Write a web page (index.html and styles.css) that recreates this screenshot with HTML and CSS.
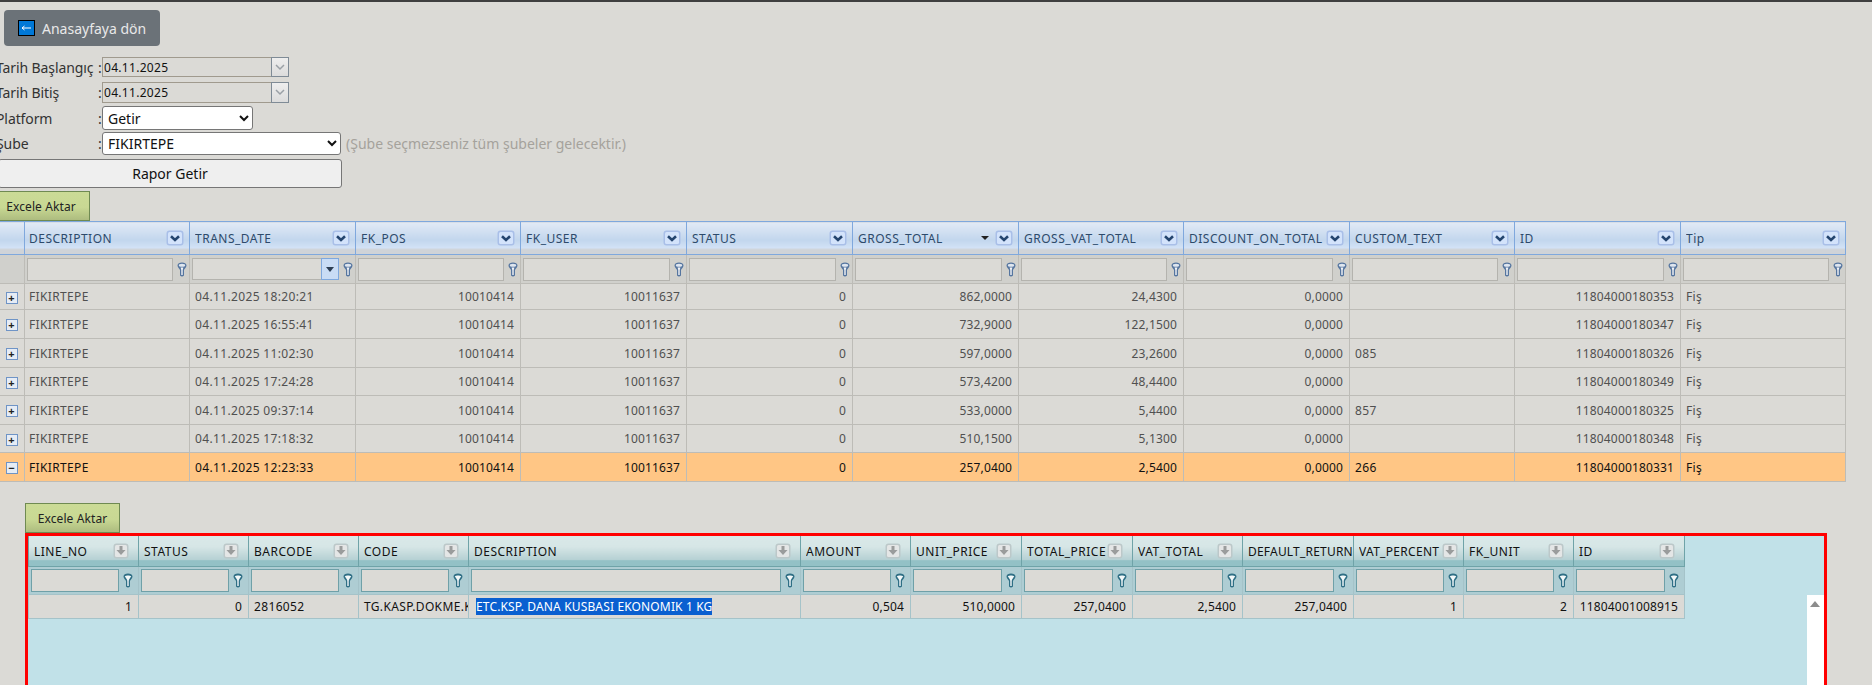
FILE: index.html
```html
<!DOCTYPE html>
<html lang="tr">
<head>
    <meta charset="UTF-8">
    <title>Rapor</title>
    <link rel="stylesheet" href="styles.css">
</head>
<body>
    <svg class="defs" width="0" height="0">
        <symbol id="funnel" viewBox="0 0 10 15">
            <path d="M0.5 3.5C0.5 1.5 2.5 0.5 5 0.5S9.5 1.5 9.5 3.5C9.5 5.5 7.5 6.5 7 8V13.5Q5 15.5 3 13.5V8C2.5 6.5 0.5 5.5 0.5 3.5Z" fill="#55759f"/>
            <ellipse cx="5" cy="3.2" rx="3.2" ry="1.5" fill="#dfe6ef"/>
            <path d="M3.6 5.6H6.4L5.7 8V13H4.3V8Z" fill="#f2f4f7"/>
        </symbol>
        <symbol id="funnel-sub" viewBox="0 0 10 15">
            <path d="M0.5 3.5C0.5 1.5 2.5 0.5 5 0.5S9.5 1.5 9.5 3.5C9.5 5.5 7.5 6.5 7 8V13.5Q5 15.5 3 13.5V8C2.5 6.5 0.5 5.5 0.5 3.5Z" fill="#2f6f85"/>
            <path d="M1.8 3.2C3.2 2.2 6.8 2.2 8.2 3.2C7.2 5.2 5.7 6 5.7 8V13H4.3V8C4.3 6 2.8 5.2 1.8 3.2Z" fill="#f2f8f9"/>
        </symbol>
        <symbol id="sort-down" viewBox="0 0 18 16">
            <rect x="0.5" y="0.5" width="17" height="15" rx="3" fill="#a9bfe8"/>
            <rect x="2" y="2" width="14" height="12" rx="1.5" fill="#d3e3fb"/>
            <path d="M5 6.3L9 10L13 6.3" fill="none" stroke="#24456f" stroke-width="2.6"/>
        </symbol>
        <symbol id="sort-grey" viewBox="0 0 16 16">
            <rect x="0.5" y="0.5" width="15" height="15" rx="3" fill="#bcc8c9"/>
            <rect x="2" y="2" width="12" height="12" rx="1.5" fill="#e4e6e6"/>
            <path d="M6.5 3H9.5V7H12.5L8 12L3.5 7H6.5Z" fill="#9a9c9c"/>
        </symbol>
    </svg>

    <div class="page">
        <a class="home-btn"><span class="home-icon"><svg width="15" height="14" viewBox="0 0 15 14"><path d="M3 7H12M3 7L5.5 5M3 7L5.5 9" fill="none" stroke="#fff" stroke-width="1"/></svg></span>Anasayfaya dön</a>

        <div class="form-row row-date1">
            <label>Tarih Başlangıç</label><span class="colon">:</span>
            <div class="date-box"><span class="date-text">04.11.2025</span><span class="date-btn"><svg width="10" height="7" viewBox="0 0 10 7"><path d="M1 1L5 5L9 1" fill="none" stroke="#9aa0a6" stroke-width="1.5"/></svg></span></div>
        </div>
        <div class="form-row row-date2">
            <label>Tarih Bitiş</label><span class="colon">:</span>
            <div class="date-box"><span class="date-text">04.11.2025</span><span class="date-btn"><svg width="10" height="7" viewBox="0 0 10 7"><path d="M1 1L5 5L9 1" fill="none" stroke="#9aa0a6" stroke-width="1.5"/></svg></span></div>
        </div>
        <div class="form-row row-platform">
            <label>Platform</label><span class="colon">:</span>
            <select class="select-platform"><option>Getir</option></select>
        </div>
        <div class="form-row row-sube">
            <label>Şube</label><span class="colon">:</span>
            <select class="select-sube"><option>FIKIRTEPE</option></select>
            <span class="hint">(Şube seçmezseniz tüm şubeler gelecektir.)</span>
        </div>
        <button class="report-btn">Rapor Getir</button>
        <div class="excel-btn excel-top">Excele Aktar</div>

        <table class="grid main-grid">
            <colgroup>
                <col class="c-exp">
                <col class="c-m"><col class="c-l"><col class="c-m"><col class="c-l"><col class="c-l"><col class="c-l"><col class="c-m"><col class="c-l"><col class="c-m"><col class="c-l"><col class="c-m">
            </colgroup>
            <tr class="head">
                <th></th>
                <th><div class="th-in"><span>DESCRIPTION</span><svg class="sort"><use href="#sort-down"/></svg></div></th>
                <th><div class="th-in"><span>TRANS_DATE</span><svg class="sort"><use href="#sort-down"/></svg></div></th>
                <th><div class="th-in"><span>FK_POS</span><svg class="sort"><use href="#sort-down"/></svg></div></th>
                <th><div class="th-in"><span>FK_USER</span><svg class="sort"><use href="#sort-down"/></svg></div></th>
                <th><div class="th-in"><span>STATUS</span><svg class="sort"><use href="#sort-down"/></svg></div></th>
                <th><div class="th-in"><span>GROSS_TOTAL</span><i class="sorted"></i><svg class="sort"><use href="#sort-down"/></svg></div></th>
                <th><div class="th-in"><span>GROSS_VAT_TOTAL</span><svg class="sort"><use href="#sort-down"/></svg></div></th>
                <th><div class="th-in"><span>DISCOUNT_ON_TOTAL</span><svg class="sort"><use href="#sort-down"/></svg></div></th>
                <th><div class="th-in"><span>CUSTOM_TEXT</span><svg class="sort"><use href="#sort-down"/></svg></div></th>
                <th><div class="th-in"><span>ID</span><svg class="sort"><use href="#sort-down"/></svg></div></th>
                <th><div class="th-in"><span>Tip</span><svg class="sort"><use href="#sort-down"/></svg></div></th>
            </tr>
            <tr class="filter">
                <td></td>
                <td><div class="f-in"><input><svg class="funnel"><use href="#funnel"/></svg></div></td>
                <td><div class="f-in"><div class="f-combo"><input><span class="f-drop"></span></div><svg class="funnel"><use href="#funnel"/></svg></div></td>
                <td><div class="f-in"><input><svg class="funnel"><use href="#funnel"/></svg></div></td>
                <td><div class="f-in"><input><svg class="funnel"><use href="#funnel"/></svg></div></td>
                <td><div class="f-in"><input><svg class="funnel"><use href="#funnel"/></svg></div></td>
                <td><div class="f-in"><input><svg class="funnel"><use href="#funnel"/></svg></div></td>
                <td><div class="f-in"><input><svg class="funnel"><use href="#funnel"/></svg></div></td>
                <td><div class="f-in"><input><svg class="funnel"><use href="#funnel"/></svg></div></td>
                <td><div class="f-in"><input><svg class="funnel"><use href="#funnel"/></svg></div></td>
                <td><div class="f-in"><input><svg class="funnel"><use href="#funnel"/></svg></div></td>
                <td><div class="f-in"><input><svg class="funnel"><use href="#funnel"/></svg></div></td>
            </tr>
            <tr class="first"><td class="exp"><span class="plus">+</span></td><td>FIKIRTEPE</td><td>04.11.2025 18:20:21</td><td class="r">10010414</td><td class="r">10011637</td><td class="r">0</td><td class="r">862,0000</td><td class="r">24,4300</td><td class="r">0,0000</td><td></td><td class="r">11804000180353</td><td>Fiş</td></tr>
            <tr><td class="exp"><span class="plus">+</span></td><td>FIKIRTEPE</td><td>04.11.2025 16:55:41</td><td class="r">10010414</td><td class="r">10011637</td><td class="r">0</td><td class="r">732,9000</td><td class="r">122,1500</td><td class="r">0,0000</td><td></td><td class="r">11804000180347</td><td>Fiş</td></tr>
            <tr><td class="exp"><span class="plus">+</span></td><td>FIKIRTEPE</td><td>04.11.2025 11:02:30</td><td class="r">10010414</td><td class="r">10011637</td><td class="r">0</td><td class="r">597,0000</td><td class="r">23,2600</td><td class="r">0,0000</td><td>085</td><td class="r">11804000180326</td><td>Fiş</td></tr>
            <tr class="short"><td class="exp"><span class="plus">+</span></td><td>FIKIRTEPE</td><td>04.11.2025 17:24:28</td><td class="r">10010414</td><td class="r">10011637</td><td class="r">0</td><td class="r">573,4200</td><td class="r">48,4400</td><td class="r">0,0000</td><td></td><td class="r">11804000180349</td><td>Fiş</td></tr>
            <tr><td class="exp"><span class="plus">+</span></td><td>FIKIRTEPE</td><td>04.11.2025 09:37:14</td><td class="r">10010414</td><td class="r">10011637</td><td class="r">0</td><td class="r">533,0000</td><td class="r">5,4400</td><td class="r">0,0000</td><td>857</td><td class="r">11804000180325</td><td>Fiş</td></tr>
            <tr class="short"><td class="exp"><span class="plus">+</span></td><td>FIKIRTEPE</td><td>04.11.2025 17:18:32</td><td class="r">10010414</td><td class="r">10011637</td><td class="r">0</td><td class="r">510,1500</td><td class="r">5,1300</td><td class="r">0,0000</td><td></td><td class="r">11804000180348</td><td>Fiş</td></tr>
            <tr class="active"><td class="exp"><span class="plus">&#8722;</span></td><td>FIKIRTEPE</td><td>04.11.2025 12:23:33</td><td class="r">10010414</td><td class="r">10011637</td><td class="r">0</td><td class="r">257,0400</td><td class="r">2,5400</td><td class="r">0,0000</td><td>266</td><td class="r">11804000180331</td><td>Fiş</td></tr>
        </table>

        <div class="detail">
            <div class="excel-btn">Excele Aktar</div>
            <div class="detail-box">
                <table class="grid sub-grid">
                    <colgroup>
                        <col class="s-a"><col class="s-a"><col class="s-a"><col class="s-a"><col class="s-desc"><col class="s-a"><col class="s-b"><col class="s-b"><col class="s-a"><col class="s-b"><col class="s-a"><col class="s-a"><col class="s-b">
                    </colgroup>
                    <tr class="head">
                        <th><div class="th-in"><span>LINE_NO</span><svg class="sort"><use href="#sort-grey"/></svg></div></th>
                        <th><div class="th-in"><span>STATUS</span><svg class="sort"><use href="#sort-grey"/></svg></div></th>
                        <th><div class="th-in"><span>BARCODE</span><svg class="sort"><use href="#sort-grey"/></svg></div></th>
                        <th><div class="th-in"><span>CODE</span><svg class="sort"><use href="#sort-grey"/></svg></div></th>
                        <th><div class="th-in"><span>DESCRIPTION</span><svg class="sort"><use href="#sort-grey"/></svg></div></th>
                        <th><div class="th-in"><span>AMOUNT</span><svg class="sort"><use href="#sort-grey"/></svg></div></th>
                        <th><div class="th-in"><span>UNIT_PRICE</span><svg class="sort"><use href="#sort-grey"/></svg></div></th>
                        <th><div class="th-in"><span>TOTAL_PRICE</span><svg class="sort"><use href="#sort-grey"/></svg></div></th>
                        <th><div class="th-in"><span>VAT_TOTAL</span><svg class="sort"><use href="#sort-grey"/></svg></div></th>
                        <th><div class="th-in wide"><span>DEFAULT_RETURN</span></div></th>
                        <th><div class="th-in tight"><span>VAT_PERCENT</span><svg class="sort"><use href="#sort-grey"/></svg></div></th>
                        <th><div class="th-in"><span>FK_UNIT</span><svg class="sort"><use href="#sort-grey"/></svg></div></th>
                        <th><div class="th-in"><span>ID</span><svg class="sort"><use href="#sort-grey"/></svg></div></th>
                    </tr>
                    <tr class="filter">
                        <td><div class="f-in"><input><svg class="funnel"><use href="#funnel-sub"/></svg></div></td>
                        <td><div class="f-in"><input><svg class="funnel"><use href="#funnel-sub"/></svg></div></td>
                        <td><div class="f-in"><input><svg class="funnel"><use href="#funnel-sub"/></svg></div></td>
                        <td><div class="f-in"><input><svg class="funnel"><use href="#funnel-sub"/></svg></div></td>
                        <td><div class="f-in"><input><svg class="funnel"><use href="#funnel-sub"/></svg></div></td>
                        <td><div class="f-in"><input><svg class="funnel"><use href="#funnel-sub"/></svg></div></td>
                        <td><div class="f-in"><input><svg class="funnel"><use href="#funnel-sub"/></svg></div></td>
                        <td><div class="f-in"><input><svg class="funnel"><use href="#funnel-sub"/></svg></div></td>
                        <td><div class="f-in"><input><svg class="funnel"><use href="#funnel-sub"/></svg></div></td>
                        <td><div class="f-in"><input><svg class="funnel"><use href="#funnel-sub"/></svg></div></td>
                        <td><div class="f-in"><input><svg class="funnel"><use href="#funnel-sub"/></svg></div></td>
                        <td><div class="f-in"><input><svg class="funnel"><use href="#funnel-sub"/></svg></div></td>
                        <td><div class="f-in"><input><svg class="funnel"><use href="#funnel-sub"/></svg></div></td>
                    </tr>
                    <tr>
                        <td class="r">1</td><td class="r">0</td><td>2816052</td><td class="code">TG.KASP.DOKME.K</td><td><span class="picked">ETC.KSP. DANA KUSBASI EKONOMIK 1 KG</span></td><td class="r">0,504</td><td class="r">510,0000</td><td class="r">257,0400</td><td class="r">2,5400</td><td class="r">257,0400</td><td class="r">1</td><td class="r">2</td><td class="r">11804001008915</td>
                    </tr>
                </table>
                <div class="scrollbar"><span class="scroll-up"></span></div>
            </div>
        </div>
    </div>
</body>
</html>
```

FILE: styles.css
```css
* {
    margin: 0;
    padding: 0;
    box-sizing: border-box;
}

html, body {
    height: 100%;
    overflow: hidden;
}

body {
    background-color: #dbdad6;
    border-top: 2px solid #3f3f3f;
    font-family: "Noto Sans", "Open Sans", sans-serif;
    font-size: 14px;
    color: #333;
}

.defs {
    position: absolute;
}

.page {
    margin-left: -2px;
    width: 1880px;
}

.home-btn {
    display: flex;
    align-items: center;
    width: 156px;
    height: 36px;
    margin: 8px 0 11px 6px;
    padding-left: 14px;
    background-color: #6b7278;
    border-radius: 4px;
    color: #e8e8e8;
    font-size: 14px;
}

.home-icon {
    display: block;
    width: 17px;
    height: 16px;
    margin-right: 7px;
    background-color: #0078d7;
    border: 1px solid #000;
}

.home-icon svg {
    display: block;
}

/* form */
.form-row {
    display: flex;
    align-items: center;
}

.form-row label {
    width: 102px;
    margin-left: -2px;
    letter-spacing: -0.1px;
    color: #333;
}

.colon {
    width: 4px;
    color: #333;
}

.row-date1 { height: 20px; margin-bottom: 5px; }
.row-date2 { height: 21px; margin-bottom: 3px; }
.row-platform { height: 24px; margin-bottom: 2px; }
.row-sube { height: 23px; margin-bottom: 4px; }

.date-box {
    display: flex;
    width: 187px;
    height: 100%;
    border: 1px solid #a09a8e;
    border-right: none;
}

.date-text {
    flex: 1;
    padding-left: 1px;
    color: #111;
    font-size: 12px;
    letter-spacing: 0.3px;
    line-height: 19px;
}

.date-btn {
    display: flex;
    align-items: center;
    justify-content: center;
    width: 18px;
    margin: -1px 0;
    background: linear-gradient(#eee, #dcdcdc);
    border: 1px solid #7f8b96;
}

select {
    height: 100%;
    padding-left: 1px;
    background-color: #fff;
    border: 1px solid #767676;
    border-radius: 3px;
    color: #111;
    font-family: inherit;
    font-size: 14px;
}

.select-platform { width: 151px; }
.select-sube { width: 239px; }

.hint {
    margin-left: 5px;
    color: #a5a29c;
}

.report-btn {
    display: block;
    width: 344px;
    height: 29px;
    margin-bottom: 3px;
    background-color: #efefef;
    border: 1px solid #767676;
    border-radius: 3px;
    color: #111;
    font-family: inherit;
    font-size: 14px;
}

.excel-btn {
    width: 95px;
    height: 30px;
    background: linear-gradient(#cbdb96 0%, #c8d893 55%, #adbc7f 100%);
    border: 1px solid #6f8a52;
    color: #222;
    font-size: 12px;
    letter-spacing: 0.1px;
    line-height: 29px;
    text-align: center;
}

.excel-top {
    margin-left: -3px;
    padding-right: 3px;
}

/* grids */
.grid {
    table-layout: fixed;
    border-collapse: collapse;
    font-size: 12px;
}

.main-grid {
    width: 1847px;
    color: #505050;
}

.c-exp { width: 26px; }
.c-m { width: 165px; }
.c-l { width: 166px; }

.grid td, .grid th {
    overflow: hidden;
    white-space: nowrap;
    font-weight: normal;
    text-align: left;
}

.grid td {
    padding: 0 5px;
    border: 1px solid #bdbcb7;
    letter-spacing: 0.35px;
}

.grid td.r {
    padding-right: 6px;
    letter-spacing: 0.15px;
    text-align: right;
}

.main-grid tr { height: 29px; }
.main-grid tr.first { height: 26px; }
.main-grid tr.short { height: 28px; }

.main-grid td:nth-child(2) {
    padding-left: 4px;
}

.main-grid th:nth-child(2) .th-in {
    padding-left: 4px;
}

.main-grid .filter td:nth-child(2) {
    padding-left: 0;
}

.main-grid .head { height: 33px; }
.main-grid .head th {
    background: linear-gradient(#e2eaf6 0%, #c2d6ed 55%, #d4e3f7 82%, #cfd3d8 83%, #cfd3d8 100%);
    border: 1px solid #7fa8dd;
    color: #2d4a6b;
}

.th-in {
    display: flex;
    align-items: center;
    padding: 0 5px;
    height: 100%;
    letter-spacing: 0.5px;
}

.th-in.tight {
    letter-spacing: 0.3px;
}

.th-in.wide {
    padding-right: 0;
    letter-spacing: 0.2px;
}

.th-in span {
    flex: 1;
    overflow: hidden;
}

.sort {
    flex: none;
    width: 18px;
    height: 16px;
}

.sorted {
    flex: none;
    width: 0;
    height: 0;
    margin-right: 6px;
    border-top: 4px solid #222;
    border-left: 4px solid transparent;
    border-right: 4px solid transparent;
}

.main-grid .filter { height: 29px; }
.main-grid .filter td {
    padding: 0;
    background-color: #d0d0cc;
    border-color: #bdbcb7;
}

.f-in {
    display: flex;
    align-items: center;
    gap: 4px;
    padding: 0 2px;
}

.f-in input {
    flex: 1;
    min-width: 0;
    height: 23px;
    background-color: #dbdad6;
    border: 1px solid #b4b3ae;
    outline: none;
}

.f-combo {
    display: flex;
    flex: 1;
    min-width: 0;
    height: 22px;
    border: 1px solid #b4b3ae;
}

.f-combo input {
    height: 100%;
    border: none;
}

.f-drop {
    position: relative;
    width: 18px;
    margin: -1px -1px -1px 0;
    background-color: #c9dcf5;
    border: 1px solid #7fa8dd;
}

.f-drop::after {
    content: "";
    position: absolute;
    left: 4px;
    top: 8px;
    border-top: 5px solid #2d3f55;
    border-left: 4px solid transparent;
    border-right: 4px solid transparent;
}

.funnel {
    flex: none;
    width: 10px;
    height: 15px;
}

.exp {
    text-align: center !important;
    padding: 0 !important;
}

.plus {
    display: inline-block;
    width: 12px;
    height: 12px;
    background-color: #e6ecf5;
    border: 1px solid #6f94c6;
    color: #222;
    font-size: 11px;
    font-weight: bold;
    letter-spacing: 0;
    line-height: 9px;
    text-align: center;
    vertical-align: middle;
}

.main-grid .active td {
    background-color: #ffc685;
    color: #111;
}

/* detail */
.detail {
    margin: 21px 0 0 27px;
}

.detail-box {
    position: relative;
    width: 1802px;
    height: 300px;
    background-color: #c1e1e8;
    border: 3px solid #f00;
}

.sub-grid {
    width: 1656px;
    color: #111;
}

.s-a { width: 110px; }
.s-b { width: 111px; }
.s-desc { width: 332px; }

.sub-grid td {
    border-color: #a5c3c9;
    background-color: #dbdad6;
}

.sub-grid .head { height: 30px; }
.sub-grid .head th {
    background: linear-gradient(#d9e8e8 0%, #d6e6e6 35%, #b5d0d3 80%, #93c1c6 82%, #93c1c6 100%);
    border: 1px solid #6fa3a8;
    border-top: none;
    color: #111;
}

.sub-grid .th-in span {
    padding-top: 2px;
}

.sub-grid .sort {
    width: 16px;
    margin-right: 4px;
}

.sub-grid .tight .sort {
    margin-right: 0;
}

.sub-grid .filter { height: 28px; }
.sub-grid .filter td {
    padding: 0;
    background-color: #aecdd3;
}

.sub-grid .f-in {
    padding: 0 5px 0 2px;
}

.sub-grid .f-in input {
    border-color: #6fa0a8;
}

.sub-grid tr:last-child { height: 24px; }

.sub-grid td.code {
    padding-right: 0;
}

.picked {
    display: inline-block;
    margin-left: 2px;
    background-color: #0a5fd0;
    color: #fff;
    letter-spacing: 0.15px;
}

.scrollbar {
    position: absolute;
    right: 0;
    top: 59px;
    bottom: 0;
    width: 17px;
    background-color: #fff;
}

.scroll-up {
    position: absolute;
    left: 3px;
    top: 6px;
    border-bottom: 6px solid #8c8c8c;
    border-left: 5px solid transparent;
    border-right: 5px solid transparent;
}
```
